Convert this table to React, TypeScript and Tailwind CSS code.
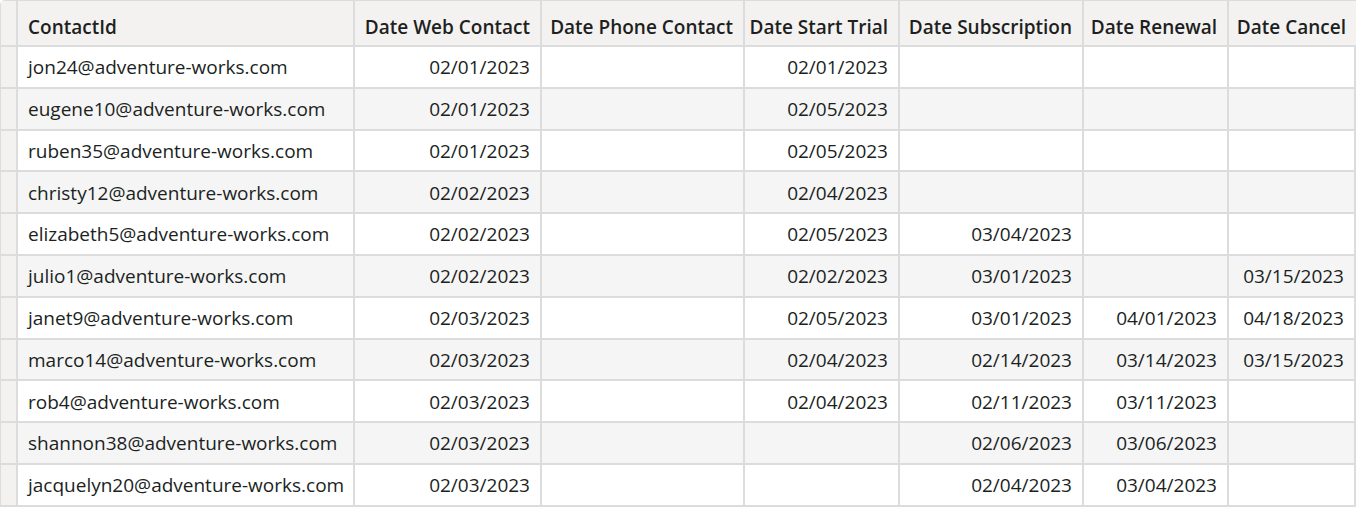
const columns = [
  { key: "id", label: "ContactId", width: "w-[337px]", align: "left" },
  { key: "web", label: "Date Web Contact", width: "w-[187px]", align: "right" },
  { key: "phone", label: "Date Phone Contact", width: "w-[203px]", align: "right" },
  { key: "trial", label: "Date Start Trial", width: "w-[155px]", align: "right" },
  { key: "sub", label: "Date Subscription", width: "w-[184px]", align: "right" },
  { key: "renew", label: "Date Renewal", width: "w-[145px]", align: "right" },
  { key: "cancel", label: "Date Cancel", width: "w-[127px]", align: "right" },
];

const rows: string[][] = [
  ["jon24@adventure-works.com", "02/01/2023", "", "02/01/2023", "", "", ""],
  ["eugene10@adventure-works.com", "02/01/2023", "", "02/05/2023", "", "", ""],
  ["ruben35@adventure-works.com", "02/01/2023", "", "02/05/2023", "", "", ""],
  ["christy12@adventure-works.com", "02/02/2023", "", "02/04/2023", "", "", ""],
  ["elizabeth5@adventure-works.com", "02/02/2023", "", "02/05/2023", "03/04/2023", "", ""],
  ["julio1@adventure-works.com", "02/02/2023", "", "02/02/2023", "03/01/2023", "", "03/15/2023"],
  ["janet9@adventure-works.com", "02/03/2023", "", "02/05/2023", "03/01/2023", "04/01/2023", "04/18/2023"],
  ["marco14@adventure-works.com", "02/03/2023", "", "02/04/2023", "02/14/2023", "03/14/2023", "03/15/2023"],
  ["rob4@adventure-works.com", "02/03/2023", "", "02/04/2023", "02/11/2023", "03/11/2023", ""],
  ["shannon38@adventure-works.com", "02/03/2023", "", "", "02/06/2023", "03/06/2023", ""],
  ["jacquelyn20@adventure-works.com", "02/03/2023", "", "", "02/04/2023", "03/04/2023", ""],
];

export default function App() {
  return (
    <div
      className="h-[507px] w-[1356px] overflow-hidden bg-white text-[19px] text-[#201f1e]"
      style={{ fontFamily: '"Open Sans", "Noto Sans", sans-serif' }}
    >
      <div className="rounded-tl-[5px] border-l border-t border-[#dcdcdc]">
        {/* Header */}
        <div className="flex h-[46px] border-b-2 border-[#dcdcdc] bg-[#f3f2f1]">
          <div className="w-[17px] shrink-0 border-r-2 border-[#dcdcdc]" />
          {columns.map((col, i) => (
            <div
              key={col.key}
              className={`${col.width} flex shrink-0 items-center whitespace-nowrap px-[10px] pt-[8px] font-semibold ${
                col.align === "right" ? "justify-end" : "justify-start"
              } ${i < columns.length - 1 ? "border-r-2 border-[#dcdcdc]" : ""}`}
            >
              {col.label}
            </div>
          ))}
        </div>

        {/* Rows */}
        {rows.map((row, r) => (
          <div
            key={r}
            className={`flex h-[41.8px] border-b-2 border-[#dcdcdc] ${
              r % 2 === 1 ? "bg-[#f5f5f5]" : "bg-white"
            }`}
          >
            <div className="w-[17px] shrink-0 border-r-2 border-[#dcdcdc] bg-[#f3f2f1]" />
            {columns.map((col, i) => (
              <div
                key={col.key}
                className={`${col.width} flex shrink-0 items-center whitespace-nowrap border-r-2 border-[#dcdcdc] px-[10px] pt-[1px] ${
                  col.align === "right" ? "justify-end" : "justify-start"
                } ${i === columns.length - 1 ? "border-r" : ""}`}
              >
                {row[i]}
              </div>
            ))}
          </div>
        ))}
      </div>
    </div>
  );
}
